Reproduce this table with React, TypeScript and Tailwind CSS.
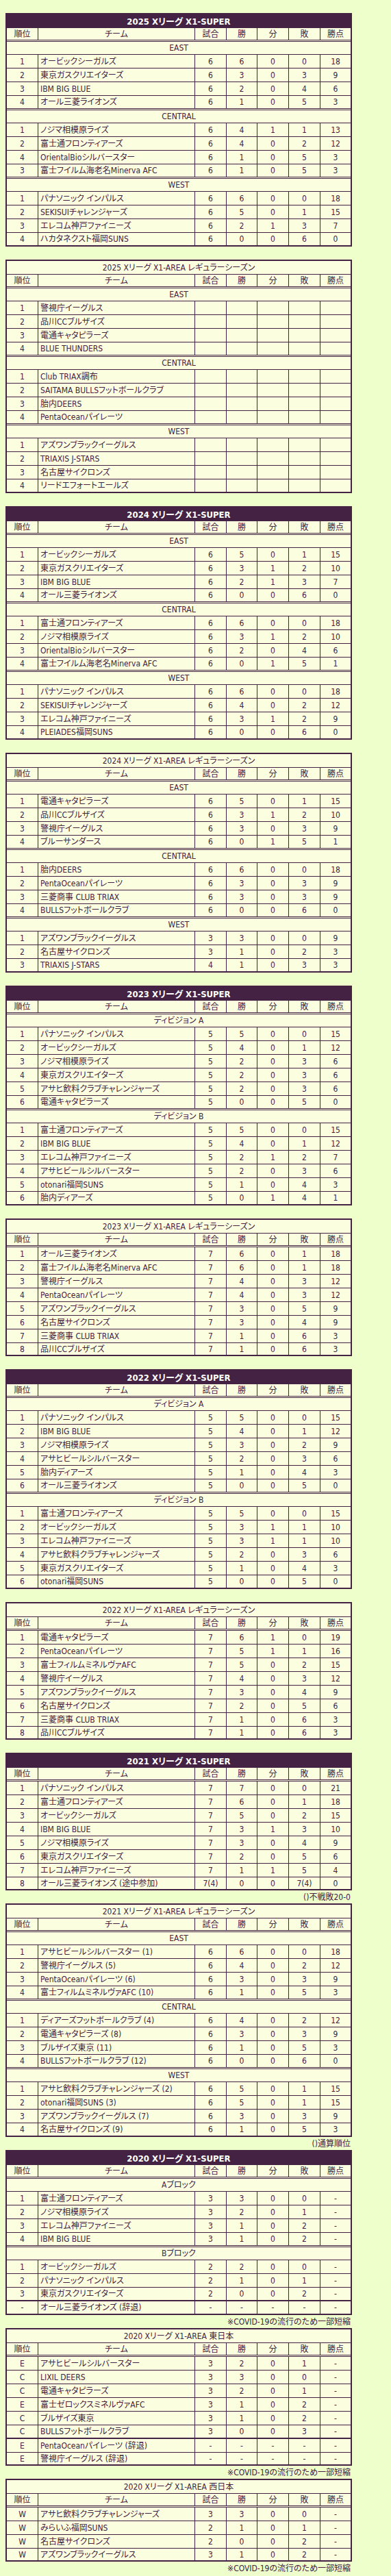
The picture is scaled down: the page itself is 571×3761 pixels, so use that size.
type Group = { name?: string; rows: string[][] };
type Standing = { title: string; dark?: boolean; groups: Group[]; note?: string };

const e = (r: string, t: string): string[] => [r, t, "", "", "", "", ""];

const tables: Standing[] = [
  {
    title: "2025 Xリーグ X1-SUPER",
    dark: true,
    groups: [
      {
        name: "EAST",
        rows: [
          ["1", "オービックシーガルズ", "6", "6", "0", "0", "18"],
          ["2", "東京ガスクリエイターズ", "6", "3", "0", "3", "9"],
          ["3", "IBM BIG BLUE", "6", "2", "0", "4", "6"],
          ["4", "オール三菱ライオンズ", "6", "1", "0", "5", "3"],
        ],
      },
      {
        name: "CENTRAL",
        rows: [
          ["1", "ノジマ相模原ライズ", "6", "4", "1", "1", "13"],
          ["2", "富士通フロンティアーズ", "6", "4", "0", "2", "12"],
          ["4", "OrientalBioシルバースター", "6", "1", "0", "5", "3"],
          ["3", "富士フイルム海老名Minerva AFC", "6", "1", "0", "5", "3"],
        ],
      },
      {
        name: "WEST",
        rows: [
          ["1", "パナソニック インパルス", "6", "6", "0", "0", "18"],
          ["2", "SEKISUIチャレンジャーズ", "6", "5", "0", "1", "15"],
          ["3", "エレコム神戸ファイニーズ", "6", "2", "1", "3", "7"],
          ["4", "ハカタネクスト福岡SUNS", "6", "0", "0", "6", "0"],
        ],
      },
    ],
  },
  {
    title: "2025 Xリーグ X1-AREA レギュラーシーズン",
    groups: [
      { name: "EAST", rows: [e("1", "警視庁イーグルス"), e("2", "品川CCブルザイズ"), e("3", "電通キャタピラーズ"), e("4", "BLUE THUNDERS")] },
      { name: "CENTRAL", rows: [e("1", "Club TRIAX調布"), e("2", "SAITAMA BULLSフットボールクラブ"), e("3", "胎内DEERS"), e("4", "PentaOceanパイレーツ")] },
      { name: "WEST", rows: [e("1", "アズワンブラックイーグルス"), e("2", "TRIAXIS J-STARS"), e("3", "名古屋サイクロンズ"), e("4", "リードエフォートエールズ")] },
    ],
  },
  {
    title: "2024 Xリーグ X1-SUPER",
    dark: true,
    groups: [
      {
        name: "EAST",
        rows: [
          ["1", "オービックシーガルズ", "6", "5", "0", "1", "15"],
          ["2", "東京ガスクリエイターズ", "6", "3", "1", "2", "10"],
          ["3", "IBM BIG BLUE", "6", "2", "1", "3", "7"],
          ["4", "オール三菱ライオンズ", "6", "0", "0", "6", "0"],
        ],
      },
      {
        name: "CENTRAL",
        rows: [
          ["1", "富士通フロンティアーズ", "6", "6", "0", "0", "18"],
          ["2", "ノジマ相模原ライズ", "6", "3", "1", "2", "10"],
          ["3", "OrientalBioシルバースター", "6", "2", "0", "4", "6"],
          ["4", "富士フイルム海老名Minerva AFC", "6", "0", "1", "5", "1"],
        ],
      },
      {
        name: "WEST",
        rows: [
          ["1", "パナソニック インパルス", "6", "6", "0", "0", "18"],
          ["2", "SEKISUIチャレンジャーズ", "6", "4", "0", "2", "12"],
          ["3", "エレコム神戸ファイニーズ", "6", "3", "1", "2", "9"],
          ["4", "PLEIADES福岡SUNS", "6", "0", "0", "6", "0"],
        ],
      },
    ],
  },
  {
    title: "2024 Xリーグ X1-AREA レギュラーシーズン",
    groups: [
      {
        name: "EAST",
        rows: [
          ["1", "電通キャタピラーズ", "6", "5", "0", "1", "15"],
          ["2", "品川CCブルザイズ", "6", "3", "1", "2", "10"],
          ["3", "警視庁イーグルス", "6", "3", "0", "3", "9"],
          ["4", "ブルーサンダース", "6", "0", "1", "5", "1"],
        ],
      },
      {
        name: "CENTRAL",
        rows: [
          ["1", "胎内DEERS", "6", "6", "0", "0", "18"],
          ["2", "PentaOceanパイレーツ", "6", "3", "0", "3", "9"],
          ["3", "三菱商事 CLUB TRIAX", "6", "3", "0", "3", "9"],
          ["4", "BULLSフットボールクラブ", "6", "0", "0", "6", "0"],
        ],
      },
      {
        name: "WEST",
        rows: [
          ["1", "アズワンブラックイーグルス", "3", "3", "0", "0", "9"],
          ["2", "名古屋サイクロンズ", "3", "1", "0", "2", "3"],
          ["3", "TRIAXIS J-STARS", "4", "1", "0", "3", "3"],
        ],
      },
    ],
  },
  {
    title: "2023 Xリーグ X1-SUPER",
    dark: true,
    groups: [
      {
        name: "ディビジョン A",
        rows: [
          ["1", "パナソニック インパルス", "5", "5", "0", "0", "15"],
          ["2", "オービックシーガルズ", "5", "4", "0", "1", "12"],
          ["3", "ノジマ相模原ライズ", "5", "2", "0", "3", "6"],
          ["4", "東京ガスクリエイターズ", "5", "2", "0", "3", "6"],
          ["5", "アサヒ飲料クラブチャレンジャーズ", "5", "2", "0", "3", "6"],
          ["6", "電通キャタピラーズ", "5", "0", "0", "5", "0"],
        ],
      },
      {
        name: "ディビジョン B",
        rows: [
          ["1", "富士通フロンティアーズ", "5", "5", "0", "0", "15"],
          ["2", "IBM BIG BLUE", "5", "4", "0", "1", "12"],
          ["3", "エレコム神戸ファイニーズ", "5", "2", "1", "2", "7"],
          ["4", "アサヒビールシルバースター", "5", "2", "0", "3", "6"],
          ["5", "otonari福岡SUNS", "5", "1", "0", "4", "3"],
          ["6", "胎内ディアーズ", "5", "0", "1", "4", "1"],
        ],
      },
    ],
  },
  {
    title: "2023 Xリーグ X1-AREA レギュラーシーズン",
    groups: [
      {
        rows: [
          ["1", "オール三菱ライオンズ", "7", "6", "0", "1", "18"],
          ["2", "富士フイルム海老名Minerva AFC", "7", "6", "0", "1", "18"],
          ["3", "警視庁イーグルス", "7", "4", "0", "3", "12"],
          ["4", "PentaOceanパイレーツ", "7", "4", "0", "3", "12"],
          ["5", "アズワンブラックイーグルス", "7", "3", "0", "5", "9"],
          ["6", "名古屋サイクロンズ", "7", "3", "0", "4", "9"],
          ["7", "三菱商事 CLUB TRIAX", "7", "1", "0", "6", "3"],
          ["8", "品川CCブルザイズ", "7", "1", "0", "6", "3"],
        ],
      },
    ],
  },
  {
    title: "2022 Xリーグ X1-SUPER",
    dark: true,
    groups: [
      {
        name: "ディビジョン A",
        rows: [
          ["1", "パナソニック インパルス", "5", "5", "0", "0", "15"],
          ["2", "IBM BIG BLUE", "5", "4", "0", "1", "12"],
          ["3", "ノジマ相模原ライズ", "5", "3", "0", "2", "9"],
          ["4", "アサヒビールシルバースター", "5", "2", "0", "3", "6"],
          ["5", "胎内ディアーズ", "5", "1", "0", "4", "3"],
          ["6", "オール三菱ライオンズ", "5", "0", "0", "5", "0"],
        ],
      },
      {
        name: "ディビジョン B",
        rows: [
          ["1", "富士通フロンティアーズ", "5", "5", "0", "0", "15"],
          ["2", "オービックシーガルズ", "5", "3", "1", "1", "10"],
          ["3", "エレコム神戸ファイニーズ", "5", "3", "1", "1", "10"],
          ["4", "アサヒ飲料クラブチャレンジャーズ", "5", "2", "0", "3", "6"],
          ["5", "東京ガスクリエイターズ", "5", "1", "0", "4", "3"],
          ["6", "otonari福岡SUNS", "5", "0", "0", "5", "0"],
        ],
      },
    ],
  },
  {
    title: "2022 Xリーグ X1-AREA レギュラーシーズン",
    groups: [
      {
        rows: [
          ["1", "電通キャタピラーズ", "7", "6", "1", "0", "19"],
          ["2", "PentaOceanパイレーツ", "7", "5", "1", "1", "16"],
          ["3", "富士フィルムミネルヴァAFC", "7", "5", "0", "2", "15"],
          ["4", "警視庁イーグルス", "7", "4", "0", "3", "12"],
          ["5", "アズワンブラックイーグルス", "7", "3", "0", "4", "9"],
          ["6", "名古屋サイクロンズ", "7", "2", "0", "5", "6"],
          ["7", "三菱商事 CLUB TRIAX", "7", "1", "0", "6", "3"],
          ["8", "品川CCブルザイズ", "7", "1", "0", "6", "3"],
        ],
      },
    ],
  },
  {
    title: "2021 Xリーグ X1-SUPER",
    dark: true,
    note: "()不戦敗20-0",
    groups: [
      {
        rows: [
          ["1", "パナソニック インパルス", "7", "7", "0", "0", "21"],
          ["2", "富士通フロンティアーズ", "7", "6", "0", "1", "18"],
          ["3", "オービックシーガルズ", "7", "5", "0", "2", "15"],
          ["4", "IBM BIG BLUE", "7", "3", "1", "3", "10"],
          ["5", "ノジマ相模原ライズ", "7", "3", "0", "4", "9"],
          ["6", "東京ガスクリエイターズ", "7", "2", "0", "5", "6"],
          ["7", "エレコム神戸ファイニーズ", "7", "1", "1", "5", "4"],
          ["8", "オール三菱ライオンズ (途中参加)", "7(4)", "0", "0", "7(4)", "0"],
        ],
      },
    ],
  },
  {
    title: "2021 Xリーグ X1-AREA レギュラーシーズン",
    note: "()通算順位",
    groups: [
      {
        name: "EAST",
        rows: [
          ["1", "アサヒビールシルバースター (1)", "6", "6", "0", "0", "18"],
          ["2", "警視庁イーグルス (5)", "6", "4", "0", "2", "12"],
          ["3", "PentaOceanパイレーツ (6)", "6", "3", "0", "3", "9"],
          ["4", "富士フィルムミネルヴァAFC (10)", "6", "1", "0", "5", "3"],
        ],
      },
      {
        name: "CENTRAL",
        rows: [
          ["1", "ディアーズフットボールクラブ (4)", "6", "4", "0", "2", "12"],
          ["2", "電通キャタピラーズ (8)", "6", "3", "0", "3", "9"],
          ["3", "ブルザイズ東京 (11)", "6", "1", "0", "5", "3"],
          ["4", "BULLSフットボールクラブ (12)", "6", "0", "0", "6", "0"],
        ],
      },
      {
        name: "WEST",
        rows: [
          ["1", "アサヒ飲料クラブチャレンジャーズ (2)", "6", "5", "0", "1", "15"],
          ["2", "otonari福岡SUNS (3)", "6", "5", "0", "1", "15"],
          ["3", "アズワンブラックイーグルス (7)", "6", "3", "0", "3", "9"],
          ["4", "名古屋サイクロンズ (9)", "6", "1", "0", "5", "3"],
        ],
      },
    ],
  },
  {
    title: "2020 Xリーグ X1-SUPER",
    dark: true,
    note: "※COVID-19の流行のため一部短縮",
    groups: [
      {
        name: "Aブロック",
        rows: [
          ["1", "富士通フロンティアーズ", "3", "3", "0", "0", "-"],
          ["2", "ノジマ相模原ライズ", "3", "2", "0", "1", "-"],
          ["3", "エレコム神戸ファイニーズ", "3", "1", "0", "2", "-"],
          ["4", "IBM BIG BLUE", "3", "1", "0", "2", "-"],
        ],
      },
      {
        name: "Bブロック",
        rows: [
          ["1", "オービックシーガルズ", "2", "2", "0", "0", "-"],
          ["2", "パナソニック インパルス", "2", "1", "0", "1", "-"],
          ["3", "東京ガスクリエイターズ", "2", "0", "0", "2", "-"],
        ],
      },
      { rows: [["-", "オール三菱ライオンズ (辞退)", "-", "-", "-", "-", "-"]] },
    ],
  },
  {
    title: "2020 Xリーグ X1-AREA 東日本",
    note: "※COVID-19の流行のため一部短縮",
    groups: [
      {
        rows: [
          ["E", "アサヒビールシルバースター", "3", "2", "0", "1", "-"],
          ["C", "LIXIL DEERS", "3", "3", "0", "0", "-"],
          ["C", "電通キャタピラーズ", "3", "2", "0", "1", "-"],
          ["E", "富士ゼロックスミネルヴァAFC", "3", "1", "0", "2", "-"],
          ["C", "ブルザイズ東京", "3", "1", "0", "2", "-"],
          ["C", "BULLSフットボールクラブ", "3", "0", "0", "3", "-"],
        ],
      },
      {
        rows: [
          ["E", "PentaOceanパイレーツ (辞退)", "-", "-", "-", "-", "-"],
          ["E", "警視庁イーグルス (辞退)", "-", "-", "-", "-", "-"],
        ],
      },
    ],
  },
  {
    title: "2020 Xリーグ X1-AREA 西日本",
    note: "※COVID-19の流行のため一部短縮",
    groups: [
      {
        rows: [
          ["W", "アサヒ飲料クラブチャレンジャーズ", "3", "3", "0", "0", "-"],
          ["W", "みらいふ福岡SUNS", "2", "1", "0", "1", "-"],
          ["W", "名古屋サイクロンズ", "2", "0", "0", "2", "-"],
          ["W", "アズワンブラックイーグルス", "3", "1", "0", "2", "-"],
        ],
      },
    ],
  },
];

const heads = ["順位", "チーム", "試合", "勝", "分", "敗", "勝点"];
const cols = "grid grid-cols-[46px_229px_46px_45px_46px_46px_1fr] border-[#442244]";

function Cells({ cells, head }: { cells: string[]; head?: boolean }) {
  return (
    <>
      {cells.map((c, i) => (
        <div
          key={i}
          className={
            "flex h-full items-center overflow-hidden whitespace-nowrap border-[#442244] " +
            (i === 1 && !head ? "justify-start pl-[3px] " : "justify-center ") +
            (i < 6 ? "border-r" : "")
          }
        >
          {c}
        </div>
      ))}
    </>
  );
}

function StandingTable({ t }: { t: Standing }) {
  const named = t.groups.some((g) => g.name);
  return (
    <div className="w-[506px]">
      <div className="border-2 border-[#442244] bg-[#fbffdf]">
        {t.dark ? (
          <div className="flex h-[20px] items-center justify-center bg-[#442244] text-[13px] font-bold text-white">
            {t.title}
          </div>
        ) : (
          <div className="flex h-[20px] items-center justify-center border-b border-[#442244]">{t.title}</div>
        )}
        <div className={cols + " h-[20px] border-b-[3px] border-double"}>
          <Cells cells={heads} head />
        </div>
        {t.groups.map((g, gi) => {
          const lastGroup = gi === t.groups.length - 1;
          const next = t.groups[gi + 1];
          return (
            <div key={gi}>
              {g.name && (
                <div className="flex h-[19px] items-center justify-center border-b border-[#442244]">{g.name}</div>
              )}
              {g.rows.map((r, ri) => {
                const lastRow = ri === g.rows.length - 1;
                let cls = "h-[20px] border-b";
                if (lastRow && lastGroup) cls = named ? "h-[18px]" : "h-[17px]";
                else if (lastRow && next?.name) cls = "h-[21px] border-b-[3px] border-double";
                else if (lastRow) cls = "h-[20px] border-b-2";
                return (
                  <div key={ri} className={cols + " " + cls}>
                    <Cells cells={r} />
                  </div>
                );
              })}
            </div>
          );
        })}
      </div>
      <div className="flex h-[19px] items-center justify-end pr-[2px]">{t.note}</div>
    </div>
  );
}

export default function App() {
  return (
    <div className="min-h-[3761px] bg-[#eeffcc] pb-[2px] pl-[8px] pt-[19px] text-[12px] leading-none text-[#442244] [font-family:'Liberation_Sans_Narrow','DejaVu_Sans_Condensed','Noto_Sans_CJK_JP',sans-serif] [font-feature-settings:'palt']">
      {tables.map((t, i) => (
        <StandingTable key={i} t={t} />
      ))}
    </div>
  );
}
